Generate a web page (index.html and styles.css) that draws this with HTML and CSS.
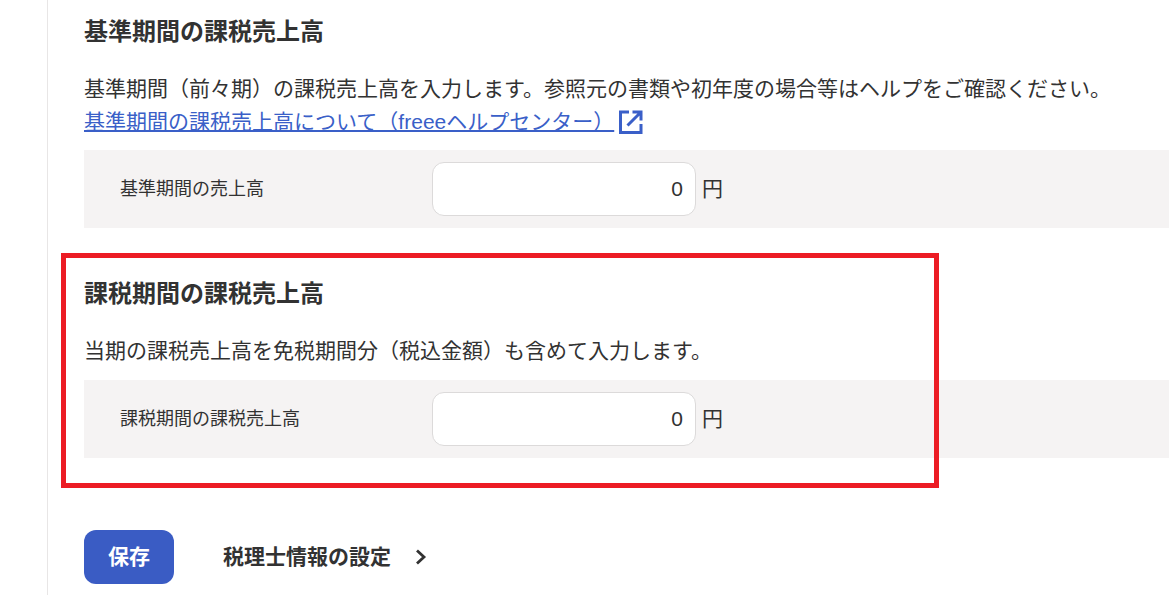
FILE: index.html
```html
<!DOCTYPE html>
<html lang="ja">
<head>
    <meta charset="UTF-8">
    <title>課税売上高の設定</title>
    <link rel="stylesheet" href="styles.css">
</head>
<body>
    <main class="content">
        <section class="section">
            <h2>基準期間の課税売上高</h2>
            <p class="desc">基準期間（前々期）の課税売上高を入力します。参照元の書類や初年度の場合等はヘルプをご確認ください。<br>
                <a href="#" class="help-link">基準期間の課税売上高について（freeeヘルプセンター）</a>
                <svg class="ext-icon" viewBox="0 0 24 24" width="24" height="24" aria-hidden="true">
                    <path d="M10 2H1.500V22.500H22V14M13.500 2H22V10.500M22 2L8.500 15.500" fill="none" stroke="#3a5fc8" stroke-width="3"/>
                </svg>
            </p>
            <div class="field-row">
                <label class="field-label">基準期間の売上高</label>
                <input class="field-input" type="text" value="0">
                <span class="unit">円</span>
            </div>
        </section>

        <section class="section section-second">
            <h2>課税期間の課税売上高</h2>
            <p class="desc">当期の課税売上高を免税期間分（税込金額）も含めて入力します。</p>
            <div class="field-row">
                <label class="field-label">課税期間の課税売上高</label>
                <input class="field-input" type="text" value="0">
                <span class="unit">円</span>
            </div>
            <div class="highlight"></div>
        </section>

        <div class="actions">
            <button class="save-button">保存</button>
            <a href="#" class="next-link">税理士情報の設定
                <svg class="next-icon" viewBox="0 0 12 18" width="12" height="18" aria-hidden="true">
                    <path d="M2 2.500L9 9L2 15.500" fill="none" stroke="#323232" stroke-width="2.800"/>
                </svg>
            </a>
        </div>
    </main>
</body>
</html>
```

FILE: styles.css
```css
html, body {
    margin: 0;
    height: 595px;
    overflow: hidden;
    background-color: #fff;
}
body {
    font-family: "Liberation Sans", "Noto Sans CJK JP", sans-serif;
    color: #323232;
}
.content {
    margin-left: 47px;
    height: 595px;
    padding: 15px 0 0 36px;
    border-left: 1px solid #e8e6e6;
    box-sizing: border-box;
}
.section {
    position: relative;
}
.section-second {
    margin-top: 49px;
}
h2 {
    margin: 0;
    font-size: 24px;
    line-height: 34px;
    font-weight: bold;
}
.desc {
    margin: 23px 0 12px;
    font-size: 21px;
    line-height: 33px;
    white-space: nowrap;
}
.section-second .desc {
    margin: 23px 0 13px;
}
.help-link {
    color: #3a5fc8;
    text-decoration: underline;
    text-decoration-thickness: 2px;
}
.ext-icon {
    vertical-align: -5px;
    margin-left: -1px;
}
.field-row {
    display: flex;
    align-items: center;
    height: 78px;
    padding-left: 36px;
    background-color: #f5f3f3;
}
.field-label {
    width: 312px;
    padding-bottom: 4px;
    font-size: 18px;
}
.field-input {
    width: 264px;
    height: 54px;
    padding: 0 12px;
    border: 1px solid #dcdada;
    border-radius: 12px;
    box-sizing: border-box;
    background-color: #fff;
    color: #323232;
    font-family: inherit;
    font-size: 21px;
    text-align: right;
}
.unit {
    margin-left: 6px;
    padding-bottom: 4px;
    font-size: 21px;
}
.highlight {
    position: absolute;
    top: -24px;
    left: -23px;
    width: 878px;
    height: 235px;
    border: 5px solid #ec1c24;
    box-sizing: border-box;
}
.actions {
    display: flex;
    align-items: center;
    margin-top: 72px;
}
.save-button {
    width: 90px;
    height: 54px;
    padding: 0 0 4px;
    border: none;
    border-radius: 12px;
    background-color: #3a5cc4;
    color: #fff;
    font-family: inherit;
    font-size: 21px;
    font-weight: bold;
}
.next-link {
    display: flex;
    align-items: center;
    gap: 24px;
    margin-left: 49px;
    padding-bottom: 4px;
    color: #323232;
    font-size: 21px;
    font-weight: bold;
    text-decoration: none;
}
.next-icon {
    margin-top: 4px;
}
```
